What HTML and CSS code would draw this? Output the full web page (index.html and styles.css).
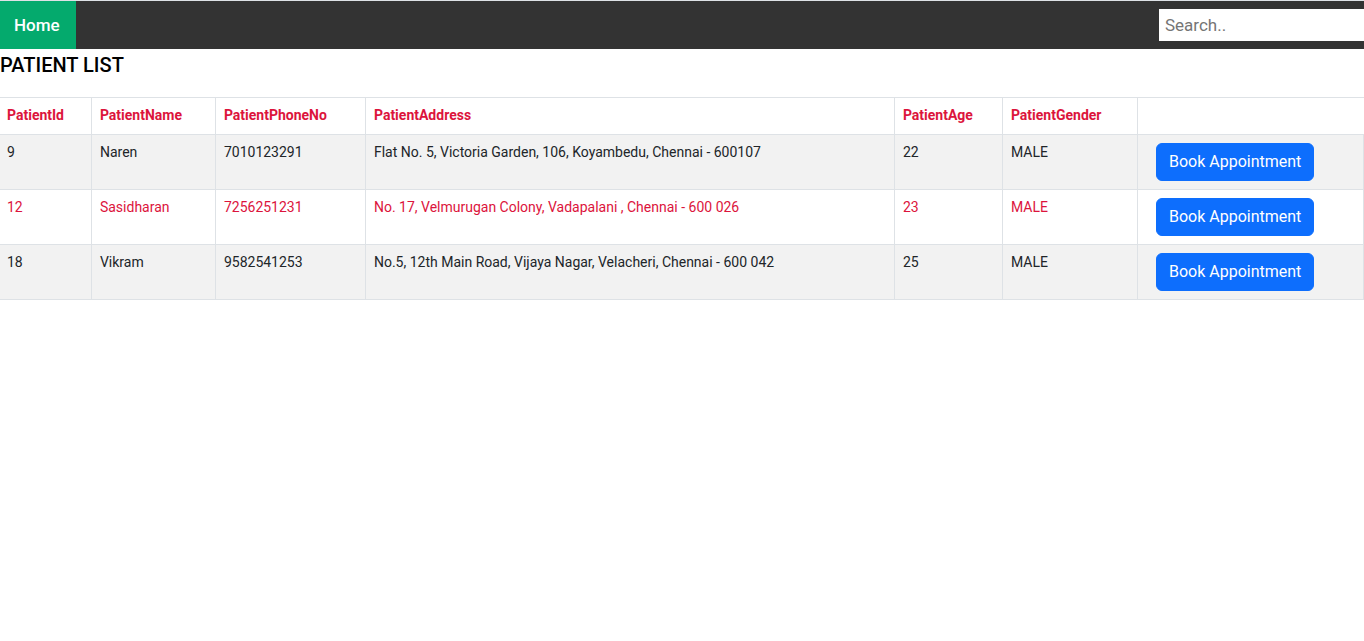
FILE: index.html
```html
<!DOCTYPE html>
<html lang="en">
<head>
<meta charset="utf-8">
<title>Patient List</title>
<link rel="stylesheet" href="styles.css">
</head>
<body>
<nav class="topnav">
  <a class="nav-link" href="#home">Home</a>
  <input class="search" type="text" placeholder="Search.." aria-label="Search">
</nav>
<main>
  <h2 class="title">PATIENT LIST</h2>
  <table class="patients">
    <colgroup>
      <col class="col-id"><col class="col-name"><col class="col-phone"><col class="col-address"><col class="col-age"><col class="col-gender"><col class="col-action">
    </colgroup>
    <thead>
      <tr><th>PatientId</th><th>PatientName</th><th>PatientPhoneNo</th><th>PatientAddress</th><th>PatientAge</th><th>PatientGender</th><th></th></tr>
    </thead>
    <tbody>
      <tr><td>9</td><td>Naren</td><td>7010123291</td><td>Flat No. 5, Victoria Garden, 106, Koyambedu, Chennai - 600107</td><td>22</td><td>MALE</td><td class="action"><button class="btn" type="button">Book Appointment</button></td></tr>
      <tr class="highlight"><td>12</td><td>Sasidharan</td><td>7256251231</td><td>No. 17, Velmurugan Colony, Vadapalani , Chennai - 600 026</td><td>23</td><td>MALE</td><td class="action"><button class="btn" type="button">Book Appointment</button></td></tr>
      <tr><td>18</td><td>Vikram</td><td>9582541253</td><td>No.5, 12th Main Road, Vijaya Nagar, Velacheri, Chennai - 600 042</td><td>25</td><td>MALE</td><td class="action"><button class="btn" type="button">Book Appointment</button></td></tr>
    </tbody>
  </table>
</main>
</body>
</html>
```
FILE: styles.css
```css
* { box-sizing: border-box; }

body {
  margin: 0;
  background: #fff;
  color: #212529;
  font-family: Roboto, "Liberation Sans", sans-serif;
  font-size: 14px;
  line-height: 20px;
}

.topnav {
  display: flex;
  align-items: center;
  justify-content: space-between;
  border-top: 1px solid #dee2e6;
  background: #333;
}

.nav-link {
  padding: 12px 16px 12px 14px;
  background: #04aa6d;
  color: #fff;
  font-size: 17px;
  font-weight: 500;
  line-height: 24px;
  text-decoration: none;
}

.search {
  width: 205px;
  height: 32px;
  padding: 6px;
  border: 0;
  border-radius: 0;
  background: #fff;
  font-family: inherit;
  font-size: 17px;
}

.search::placeholder { color: #757575; }

.title {
  margin: 0 0 16px;
  color: #000;
  font-size: 20px;
  font-weight: 500;
  line-height: 32px;
}

.patients {
  width: 100%;
  table-layout: fixed;
  border-collapse: separate;
  border-spacing: 0;
  border-top: 1px solid #dee2e6;
}

.col-id { width: 6.74%; }
.col-name { width: 9.09%; }
.col-phone { width: 11%; }
.col-address { width: 38.78%; }
.col-age { width: 7.92%; }
.col-gender { width: 9.9%; }

.patients th,
.patients td {
  padding: 7px 8px 9px;
  border-right: 1px solid #dee2e6;
  border-bottom: 1px solid #dee2e6;
  text-align: left;
  vertical-align: top;
}

.patients th:first-child,
.patients td:first-child { padding-left: 7px; }

.patients th { color: crimson; font-weight: 700; }
.patients th:last-child { border-right: 0; }
.patients tbody tr:nth-child(odd) { background: #f2f2f2; }
.patients .highlight { color: crimson; }
.patients .action { padding: 8px 8px 8px 18px; }

.btn {
  display: block;
  padding: 6px 12px;
  border: 1px solid #0d6efd;
  border-radius: 6px;
  background: #0d6efd;
  color: #fff;
  font-family: inherit;
  font-size: 16px;
  line-height: 24px;
}
```
